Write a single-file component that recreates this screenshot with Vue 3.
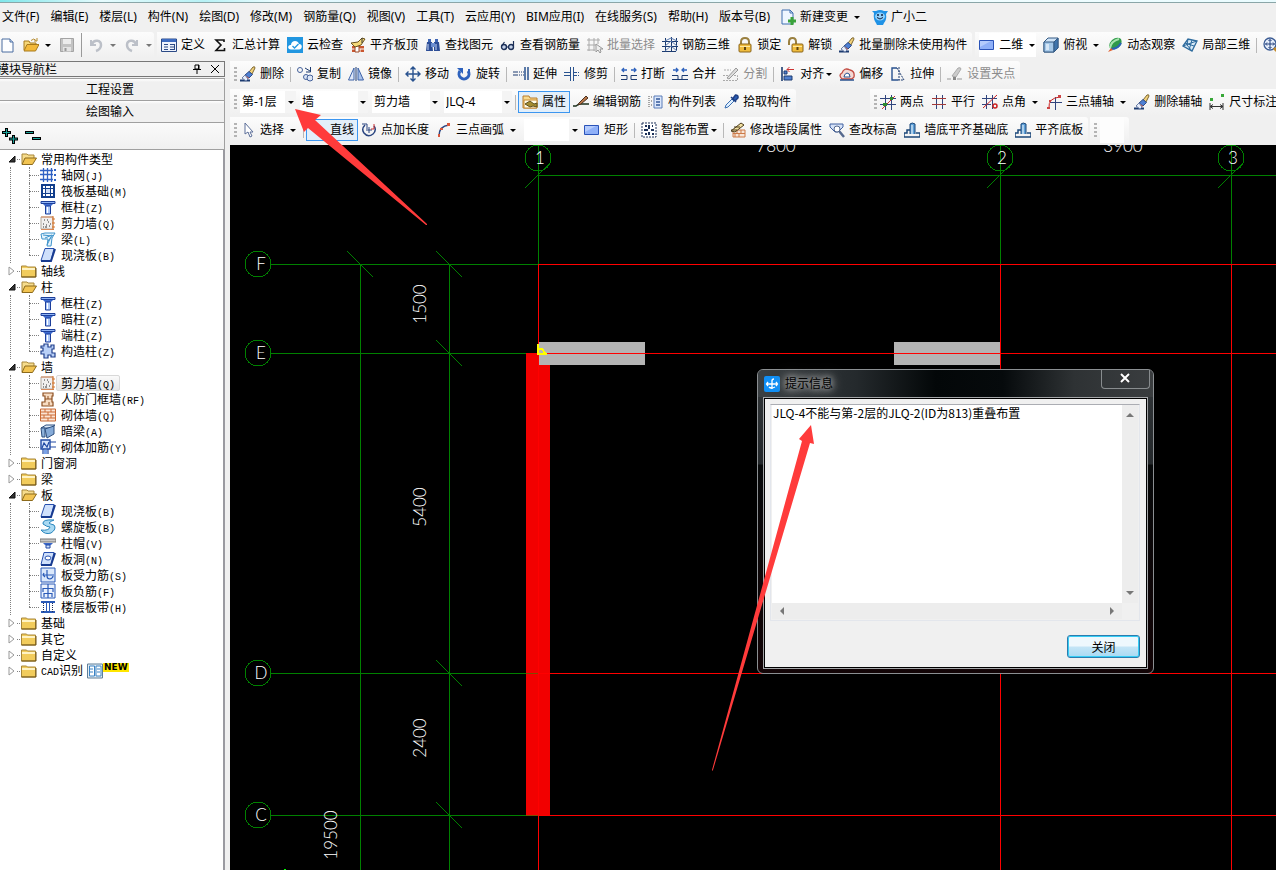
<script setup>
import { ref } from 'vue'

const glyphs = {
  fileNew: '<path d="M2 2h8l3 3v10H2z" fill="#fdfeff" stroke="#4a6da0"/><path d="M10 2v3h3" fill="#cfe0f5" stroke="#4a6da0"/>',
  open: '<path d="M1 13V4h5l1 2h6v2" fill="#f6d778" stroke="#a87a1c"/><path d="M1 14L4 7.500h12L12.500 14z" fill="#f3b93a" stroke="#a87a1c"/><path d="M8 3.500q3-3 5 0M14 1v3h-3" fill="none" stroke="#b58a2c"/>',
  save: '<path d="M1.500 1.500h13v13h-13z" fill="#c3c3c3" stroke="#a4a4a4"/><path d="M4 2h8v5H4z" fill="#ececec"/><path d="M4 10h8v4.500H4z" fill="#e4e4e4"/><path d="M5.500 11h2v3h-2z" fill="#999"/>',
  undo: '<path d="M3 3v5h5" fill="none" stroke="#bcc0c8" stroke-width="2"/><path d="M4 7C6 2 13 3 13 8c0 3-2 5-5 6" fill="none" stroke="#bcc0c8" stroke-width="2.500"/>',
  redo: '<path d="M13 3v5H8" fill="none" stroke="#bcc0c8" stroke-width="2"/><path d="M12 7C10 2 3 3 3 8c0 3 2 5 5 6" fill="none" stroke="#bcc0c8" stroke-width="2.500"/>',
  define: '<path d="M.500 2h15v12.500H.500z" fill="#eef3fc" stroke="#2c4a86"/><path d="M1 2h14v3H1z" fill="#3d6bc0"/><path d="M3 7.500h4M3 10h4M3 12.500h4M9 7.500h4M9 10h4M9 12.500h4M13.500 7v6" stroke="#2c4a86" fill="none"/>',
  sigma: '<path d="M12 5V3H4l5 5-5 5.500h8.500V11" fill="none" stroke="#111" stroke-width="1.600"/>',
  cloud: '<path d="M0 0h16v16H0z" fill="#2196e0"/><path d="M4 12.500C0 12.500.500 7.500 4 8c0-5 7-5.500 8-1 4 0 3.500 5.500 0 5.500z" fill="#fff"/><path d="M5.500 9l2 2 4-4" fill="none" stroke="#2196e0" stroke-width="1.300"/>',
  levelTop: '<path d="M2 9h12v6H2z" fill="#c9562f"/><path d="M2 12h12M6 9v3M10 12v3" stroke="#fff"/><path d="M5 9h4v6H5z" fill="#fff" stroke="#9c4a28"/><path d="M1 6l7-1 4-4 3 1-4 6-6 2z" fill="#f5d978" stroke="#6b5420"/><path d="M12 1v5" stroke="#333"/>',
  find: '<path d="M3 2h3v3H3zM10 2h3v3h-3z" fill="#3f66b4"/><path d="M2 5h5l1 9H1zM9 5h5l1 9H9z" fill="#2c4d96"/><path d="M6 6h4v4H6z" fill="#6b8ed0"/><path d="M3 7v6M11 7v6" stroke="#c6d7f4"/>',
  glasses: '<circle cx="4" cy="10" r="2.500" fill="#c5d2e8" stroke="#1c2f57" stroke-width="1.400"/><circle cx="11" cy="10" r="2.500" fill="#c5d2e8" stroke="#1c2f57" stroke-width="1.400"/><path d="M6.500 10h2M1.500 9l3-4M13.500 9V4" fill="none" stroke="#1c2f57" stroke-width="1.200"/>',
  batch: '<path d="M2 1v13M7 1v13M0 3h13M0 8h9M0 13h8M11 1v6" stroke="#aaa" fill="none"/><path d="M9 7v8l2-2 2 3 1-1-1-3h3z" fill="#eee" stroke="#999"/>',
  rebar3d: '<path d="M3.500 1v14M9.500 0v14M14.500 1v13M0 4.500h16M0 9.500h16M0 14.500h14" stroke="#1c3b70" fill="none"/><path d="M3 4l6-3 6 3M3 9l6-5 6 5M3 14l6-5 6 5" stroke="#5b7bb0" fill="none"/>',
  lock: '<path d="M4 8V5q0-4 4-4t4 4v3" fill="none" stroke="#9a8040" stroke-width="2"/><rect x="2" y="7" width="12" height="8" rx="1" fill="#f0bc3d" stroke="#8a641a"/><path d="M3 9.500h10" stroke="#ffe9a0"/><path d="M8 10v3" stroke="#5c4310" stroke-width="2"/>',
  unlock: '<path d="M1 8V5q0-4 3.500-4T8 5v2" fill="none" stroke="#9a8040" stroke-width="2"/><rect x="4" y="7" width="11" height="8" rx="1" fill="#f0bc3d" stroke="#8a641a"/><path d="M5 9.500h9" stroke="#ffe9a0"/><path d="M9.500 10v3" stroke="#5c4310" stroke-width="2"/>',
  erase: '<path d="M9 6l4-5q2-1 2 1l-3 6z" fill="#f2d27c" stroke="#7c6630"/><path d="M9 5.500L12.500 8.500 9 12 5 9z" fill="#4e80d4" stroke="#2c4a86"/><path d="M5 9l4 3-2 2-4-1z" fill="#d95b4a"/><path d="M0 14.500h10" stroke="#1c3b70" stroke-width="2"/><path d="M2 12l3-3 3 4-2 2z" fill="#e8eefb" stroke="#6a7fa8"/>',
  flat: '<path d="M.500 3.500h14v9H.500z" fill="#8fb0f8" stroke="#2a53b8"/><path d="M1 4h11L1 10z" fill="#b4cbfc"/>',
  cube: '<path d="M1 5l4-4h10v10l-4 4H1z" fill="#cfe3f6" stroke="#345a84"/><path d="M1 5h10v10H1z" fill="#a5c8e8" stroke="#345a84"/><path d="M11 5l4-4v10l-4 4z" fill="#3f74ab" stroke="#345a84"/><path d="M3 7h3v6H3z" fill="#d5e6f6"/>',
  orbit: '<path d="M5 3q5-4 9-1 2 5-3 9-5 2-8 0Q1 7 5 3z" fill="#2f9a4a"/><path d="M12 2q-8 2-9 9" stroke="#a8e4ae" stroke-width="2" fill="none"/><path d="M14 6q-3 6-10 6" stroke="#2b62b5" stroke-width="2" fill="none"/><path d="M1 15l3-4 2 2z" fill="#e06030"/>',
  local3d: '<path d="M1 9l5-7 9 2-5 10z" fill="#d8eaf7" stroke="#2f6c9e" stroke-width="1.300"/><path d="M3 6l9 3M6 2l-1 6 5 6M10 3l-3 10M15 4l-6 2-8 3" fill="none" stroke="#2f6c9e"/>',
  zoomPan: '<circle cx="7" cy="7" r="6" fill="#e8f0fc" stroke="#3c5c94" stroke-width="1.300"/><path d="M7 2.500v9M2.500 7h9M5.500 4L7 2.500 8.500 4M5.500 10L7 11.500 8.500 10M4 5.500L2.500 7 4 8.500M10 5.500L11.500 7 10 8.500" stroke="#1f3d7a" fill="none"/><path d="M11 11l4 4" stroke="#c48a28" stroke-width="3"/>',
  copy: '<circle cx="3" cy="4" r="2.500" fill="none" stroke="#44609a"/><circle cx="9" cy="11" r="2.500" fill="#dce6f6" stroke="#44609a"/><circle cx="13" cy="12" r="3" fill="#dce6f6" stroke="#44609a"/><path d="M8 2l5 3M13.500 1v5H9" fill="none" stroke="#1c3b70"/>',
  mirror: '<path d="M.500 14L6 2v12z" fill="#dfe8f8" stroke="#3d63a8"/><path d="M8 1v14" stroke="#1c3b70"/><path d="M15.500 14L10 2v12z" fill="#a9c2ea" stroke="#3d63a8"/>',
  move: '<path d="M8 1v14M1 8h14M5.500 3.500L8 1l2.500 2.500M5.500 12.500L8 15l2.500-2.500M3.500 5.500L1 8l2.500 2.500M12.500 5.500L15 8l-2.500 2.500" fill="none" stroke="#28528f" stroke-width="1.400"/>',
  rotate: '<path d="M4 5a5 5 0 1 0 8 0" fill="none" stroke="#2e62bd" stroke-width="3"/><path d="M1 2h6v6z" fill="#2e62bd"/><path d="M13 3v4" stroke="#2e62bd" stroke-width="2"/>',
  extend: '<path d="M0 6h5M0 9h5" stroke="#1c3b70"/><path d="M6 6h5M6 9h5" stroke="#1c3b70" stroke-dasharray="1 1"/><path d="M12 1v13M15 1v13" stroke="#28528f" stroke-width="1.500"/>',
  trim: '<path d="M6.500 1v14M9.500 1v14M0 6.500h6M0 9.500h6M9 6.500h3M9 9.500h3" stroke="#28528f" fill="none"/><path d="M12 6.500h4M12 9.500h4" stroke="#28528f" stroke-dasharray="1 1"/>',
  split: '<path d="M0 9.500h6v4H0M16 9.500h-6v4h6" fill="none" stroke="#1c3b70"/><path d="M1 4h5M10 4h5M3 2L1 4l2 2M13 2l2 2-2 2" fill="none" stroke="#2e62bd" stroke-width="1.300"/>',
  merge: '<path d="M0 9.500h6v4H0M16 9.500h-6v4h6M6 13.500h4" fill="none" stroke="#1c3b70"/><path d="M1 4h5M10 4h5M4 2l2 2-2 2M12 2l-2 2 2 2" fill="none" stroke="#2e62bd" stroke-width="1.300"/>',
  divide: '<path d="M1 4h7M0 9.500h6M0 14.500h14.500v-5H11" fill="none" stroke="#aaa" stroke-dasharray="2 1"/><path d="M4 12l9-10 2 2-9 9z" fill="#ddd" stroke="#999"/>',
  align: '<path d="M2 1v14" stroke="#1c3b70" stroke-width="1.600"/><path d="M4 10h8v4H4zM4 5h3v3H4z" fill="#4f7fcf" stroke="#1c3b70"/><path d="M14 3.500H7M9.500 1L7 3.500 9.500 6" fill="none" stroke="#c33"/>',
  offset: '<path d="M3 13Q-1 9 3 7q2-6 8-3 5 1 4 7l-2 2z" fill="#f4d8d4" stroke="#c24b42" stroke-width="1.300"/><path d="M5 11q0-3 3-4 3 0 3 4z" fill="#fff" stroke="#28528f"/><path d="M1 14h14" stroke="#28528f" stroke-width="1.500"/>',
  stretch: '<path d="M8 14H2V2h5" fill="none" stroke="#28528f" stroke-width="1.400"/><path d="M7 2l7 12H8M9 1v13" fill="none" stroke="#1c3b70" stroke-dasharray="2 1"/>',
  grip: '<path d="M5 10l6-8q3-1 3 1l-5 8z" fill="#ccc" stroke="#aaa"/><path d="M0 13h4M10 13h5" stroke="#999"/><path d="M6 11h3v3H6z" fill="#888"/>',
  props: '<path d="M1 13V2h6l1 2h7v10H1z" fill="#f8d98c" stroke="#b87c2c"/><path d="M2 6h13v8H2z" fill="#fffbe8" stroke="#c98a33"/><path d="M3 10l5-3 4 3 3-1v4l-4-1-3 1z" fill="#a48b30" stroke="#5e5220"/>',
  editBar: '<path d="M0 12h3l3-2h10" fill="none" stroke="#1b2f1b" stroke-width="1.500"/><path d="M6 9l7-7 2 2-7 6-3 1z" fill="#b9774a" stroke="#4b321f"/>',
  list: '<path d="M6 2h8v12H6z" fill="#dbe7fb" stroke="#5a7db8"/><path d="M8 5h4M8 8h4M8 11h4" stroke="#34599b" stroke-width="1.500"/><path d="M1 2v12M3 3h2M3 7h2M3 11h2" stroke="#555" stroke-dasharray="1 1"/>',
  pick: '<path d="M2 14l1-3 6-6 2 2-6 6z" fill="#dff0ff" stroke="#3b6fb4"/><path d="M8 3l5 5M9.500 5l3-4q3 0 2.500 3l-3 3z" fill="#2b5db5" stroke="#1e3f83" stroke-width="1.500"/>',
  twoPoint: '<path d="M5.500 1v15M11.500 1v15M0 4.500h16M0 10.500h16" stroke="#30457e"/><path d="M2 15L15 2" stroke="#c33"/><path d="M3 9h4v3H3zM10 3h3v3h-3z" fill="#2e8b2e"/>',
  parallel: '<path d="M5.500 1v14M11.500 1v14" stroke="#30457e"/><path d="M1 4.500h14M1 10.500h14" stroke="#a33a3a"/>',
  pointAngle: '<path d="M4.500 1v14M10.500 1v14M0 4.500h15M0 10.500h9" stroke="#30457e"/><path d="M1 14L15 1" stroke="#c22"/><circle cx="13" cy="12" r="2" fill="none" stroke="#c22" stroke-width="1.500"/>',
  threeAxis: '<path d="M9.500 3v13M4 8.500h12" stroke="#30457e"/><path d="M3 14q-1-10 11-11" fill="none" stroke="#c22"/><path d="M1 13h3v2H1zM3 6h2v2H3zM12 1h3v3h-3z" fill="#c44"/>',
  dimension: '<path d="M1 4h3v3H1zM12 0h3v3h-3z" fill="#38a838"/><path d="M1 9v7M14 9v7M1 12.500h13M4 10.500l-3 2 3 2M11 10.500l3 2-3 2" fill="none" stroke="#333"/>',
  cursor: '<path d="M5 1v11l3-2 2 5 2-1-2-4h3z" fill="#fff" stroke="#5c6f99"/>',
  pointLen: '<path d="M4 3q-4 4-1 8 4 5 9 1 4-4 1-8" fill="none" stroke="#2a4580" stroke-width="1.500"/><path d="M1 2h5v5M8 5v6M5 8h6" stroke="#2a4580" fill="none"/><path d="M13 2v5h-3" stroke="#c33" fill="none"/>',
  arc: '<path d="M3 14Q3 4 13 3" fill="none" stroke="#2a4580" stroke-width="1.500"/><path d="M2 12h2v3H2zM4 6h3v2H4zM11 1h3v3h-3z" fill="#d8573c"/>',
  smart: '<path d="M1 1h14v14H1z" fill="#fff" stroke="#1c3058" stroke-dasharray="2 1"/><path d="M8 3v4M8 10v3M3 8h4M10 8h3M4 4h2M11 4h1M4 12h2M11 12h2" stroke="#1c3058" stroke-width="2"/>',
  wallSeg: '<path d="M3 8h12v7H3z" fill="#f8e6d8" stroke="#cc7a48"/><path d="M3 11.500h12M7 8v3M11 8v3M9 12v3M5 12v3" stroke="#cc7a48"/><path d="M1 9L11 1l3 2-9 7z" fill="#f3e1a0" stroke="#4d3d1d"/><path d="M1 8h6M4 5h6" stroke="#4d3d1d"/>',
  elevation: '<path d="M1 2h13v3l-5 5H6L1 5z" fill="#d6e2f7" stroke="#4060a0"/><circle cx="8" cy="7" r="3" fill="#fff" stroke="#55698e"/><path d="M10 9l5 6" stroke="#55698e" stroke-width="2.500"/>',
  wallBase: '<path d="M6 12V2q2-2 5 0v10" fill="#5ea0d8" stroke="#1b4779"/><path d="M8 3v9" stroke="#fff"/><path d="M0 15v-4h3V8h3M16 15v-4h-4M0 15h16" fill="none" stroke="#1b4779" stroke-width="1.500"/>',
  change: '<path d="M1 1h8l3 3v11H1z" fill="#eef6ff" stroke="#3f6fb0"/><path d="M9 1v3h3" fill="none" stroke="#3f6fb0"/><path d="M11 8v8M7 12h8" stroke="#3aa23a" stroke-width="3"/>',
  mascot: '<path d="M2 4L0 2h4q4-2 8 0h4l-2 3q1 6-2 9l-1 2H5l-1-2Q1 10 2 4z" fill="#1f92e6"/><ellipse cx="8" cy="7.500" rx="5" ry="4" fill="#8fd0fb"/><path d="M6 5v2M10 5v2" stroke="#124" stroke-width="1.500"/><path d="M5 8.500q3 3 6 0" stroke="#124" fill="none"/>',
  axisNet: '<path d="M3.500 1v14M7.500 1v14M11.500 1v14M0 3.500h13M0 7.500h13M0 12.500h13" stroke="#2f62c4" stroke-width="1.300"/><path d="M14 2h2v2h-2zM14 7h2v2h-2zM14 12h2v2h-2z" fill="#2f62c4"/>',
  raft: '<path d="M2 2h12v12H2z" fill="#fff" stroke="#123e8c" stroke-width="2"/><path d="M5.500 1v14M10.500 1v14M1 5.500h14M1 10.500h14" stroke="#123e8c"/><path d="M6 6h4v4H6z" fill="#cddcf6"/>',
  column: '<path d="M1 2.500h14v2H1z" fill="#8fb4f5" stroke="#1d3f9a"/><path d="M3 5h10l-2 2H5z" fill="#3d6bd0"/><path d="M5.500 7h5v8h-5z" fill="#a9c6f8" stroke="#1d3f9a"/><path d="M7.500 8v6" stroke="#fff"/>',
  shear: '<path d="M1 2h12v12H1z" fill="#f1efef" stroke="#b0a9a0"/><path d="M1 2h12M1 14.500h13" stroke="#d98a5c"/><path d="M4 5h1M8 7h1M3 9h1M6 10h1M9 11h1M5 12h2M10 9h1M7 5h1M3 12h1" stroke="#333"/><path d="M13 1v14M12 4h3M12 8h3M12 12h3" stroke="#d9762c"/>',
  beam: '<path d="M1 3l4-1h10l-3 5-1 8H7l1-7H2z" fill="#e6f4fc" stroke="#3f94cc"/><path d="M3 4l9 1M5 7l7-3M8 10l5-6M7 14l4-8" stroke="#3f94cc"/>',
  slab: '<path d="M5 1.500h9l-3 12H1z" fill="#cfe0fb" stroke="#274fae"/><path d="M1 14h10l4-12" fill="none" stroke="#173a90" stroke-width="2"/>',
  structCol: '<path d="M4 1h4v3h3V2h3v4h-2v4h3v4h-4v-2H8v3H4v-4H1V8h2V5H1V3h3z" fill="#b9d0f7" stroke="#203f8c" stroke-width="1.200"/>',
  doorWall: '<path d="M3 2h10v3h-1v6h1v4H2v-4h3V5H3z" fill="#f7dcc2" stroke="#8d4f21" stroke-width="1.200"/><path d="M5 8h7M8 5v3M9 11v3" stroke="#8d4f21"/>',
  brick: '<path d="M.500 2h15v12H.500z" fill="#fbe4d5" stroke="#cb6a35"/><path d="M1 5h14M1 8h14M1 11h14M5 2v3M11 2v3M8 5v3M4 8v3M11 8v3M8 11v3" stroke="#cb6a35"/>',
  hidden: '<path d="M1 5l5-3h9l-4 3z" fill="#dbe9f8" stroke="#2e5080"/><path d="M1 5h4v9H2z" fill="#8fb3db" stroke="#2e5080"/><path d="M5 6l9-3v8l-7 4z" fill="#86abd8" stroke="#2e5080"/>',
  tieBar: '<path d="M1 1h9v9H1z" fill="#d8e5fb" stroke="#1f49a4" stroke-width="1.400"/><path d="M2 9l2-5 3 4 2-5M10 3h6M10 8h6M3 10v5M8 10v5" stroke="#1f49a4" stroke-width="1.200" fill="none"/><path d="M4 11h3v4H4z" fill="#7aa2e8"/>',
  spiral: '<path d="M14 1Q2 0 3 5q4 3 7 3-1 4-9 3 4 5 10 3 6-4 3-8-4-1-5-2 2-2 5-3z" fill="#a9d9f2" stroke="#2a86bd"/>',
  cap: '<path d="M0 4h16v3H0z" fill="#c8c8c8" stroke="#777"/><path d="M3 8h10l-2 2H5z" fill="#3a67c8"/><path d="M6 10h4v3H6z" fill="#cfe0fb" stroke="#1f49a4"/>',
  slabHole: '<path d="M4 1.500h10l-3 12H1z" fill="#cfe0fb" stroke="#274fae"/><path d="M1 14h10l4-12" fill="none" stroke="#173a90" stroke-width="2"/><ellipse cx="8" cy="7" rx="3" ry="2" fill="#fff" stroke="#274fae"/>',
  slabBar: '<path d="M1 1h14v14H1z" fill="#dbe8fb" stroke="#2b5bb8"/><path d="M3 8h11M7 3v6q0 3 3 3 3-1 3-3M4 6l-1 2 2 2" fill="none" stroke="#2b5bb8" stroke-width="1.200"/>',
  slabNeg: '<path d="M1 1h14v14H1z" fill="#eaf1fd" stroke="#2b5bb8"/><path d="M8 1v14M3 5.500h10M3 5v4M13 5v4M4 10.500h8M4 10v4M12 10v4" stroke="#2b5bb8" stroke-width="1.200" fill="none"/>',
  strip: '<path d="M1 3h14M1 13h14" stroke="#2b5bb8" stroke-width="2"/><path d="M3.500 4v9M12.500 4v9" stroke="#1f2f58" stroke-dasharray="1 1"/><path d="M6.500 4v9M9.500 4v9" stroke="#2b5bb8"/>',
  cadPages: '<path d="M.500 1h15v14H.500z" fill="#e5eef5" stroke="#5f7f98"/><path d="M2.500 3h5v10h-5zM9 3h5v10H9z" fill="#fff" stroke="#3a83c4"/><path d="M3 6h3M3 9h3M10 6h3M10 9h3" stroke="#3a83c4"/>',
  folder: '<path d="M.500 14V3h5l1 1h8v10z" fill="#f2cc5c" stroke="#a8873a"/><path d="M1 6h13" stroke="#fff3c4" stroke-width="2"/><path d="M.500 14h14.500V5" fill="none" stroke="#6e5212"/>',
  folderOpen: '<path d="M1 13V3h5l1 1h6v3" fill="#f6dc8c" stroke="#a8873a"/><path d="M1 13.500L4 7h11.500l-4 6.500z" fill="#f2c452" stroke="#8c6a1c"/>',
  logo: '<rect width="16" height="16" rx="2" fill="#108ff5"/><path d="M8 4v9M2.500 8h11M8 5q0-2 2-2M4 6L2.500 8 4 10M12 6l1.500 2L12 10M5 11q2 2 6 0" fill="none" stroke="#fff" stroke-width="1.300"/>'
}

const menus = ['文件(F)', '编辑(E)', '楼层(L)', '构件(N)', '绘图(D)', '修改(M)', '钢筋量(Q)', '视图(V)', '工具(T)', '云应用(Y)', 'BIM应用(I)', '在线服务(S)', '帮助(H)', '版本号(B)']

const b = (icon, text, extra = {}) => ({ type: 'btn', icon, text, ...extra })
const sep = { type: 'sep' }
const combo = (name, text, size = '') => ({ type: 'combo', name, text, size })
const drop = { drop: 'wide' }
const tight = { drop: 'tight' }

const topBars = [
  { items: [b('define', '定义'), b('sigma', '汇总计算'), b('cloud', '云检查'), b('levelTop', '平齐板顶'), b('find', '查找图元'), b('glasses', '查看钢筋量'), b('batch', '批量选择', { off: true }), b('rebar3d', '钢筋三维'), b('lock', '锁定'), b('unlock', '解锁'), b('erase', '批量删除未使用构件')] },
  { items: [b('flat', '二维', { drop: 'wide', white: true }), b('cube', '俯视', drop), b('orbit', '动态观察'), b('local3d', '局部三维'), sep, b('zoomPan', '')] }
]

const rows = [
  [{ grip: true, items: [b('erase', '删除'), sep, b('copy', '复制'), b('mirror', '镜像'), sep, b('move', '移动'), b('rotate', '旋转'), sep, b('extend', '延伸'), b('trim', '修剪'), sep, b('split', '打断'), b('merge', '合并'), b('divide', '分割', { off: true }), sep, b('align', '对齐', tight), b('offset', '偏移'), b('stretch', '拉伸'), sep, b('grip', '设置夹点', { off: true })] }],
  [
    { grip: true, items: [combo('楼层', '第-1层', 'small'), combo('构件类型', '墙'), combo('构件', '剪力墙'), combo('构件名称', 'JLQ-4'), sep, b('props', '属性', { on: true }), b('editBar', '编辑钢筋'), b('list', '构件列表'), b('pick', '拾取构件')] },
    { grip: true, apart: true, items: [b('twoPoint', '两点'), b('parallel', '平行'), b('pointAngle', '点角', drop), b('threeAxis', '三点辅轴', drop), b('erase', '删除辅轴'), b('dimension', '尺寸标注')] }
  ],
  [
    { grip: true, items: [b('cursor', '选择', drop), sep, b('', '直线', { on: true }), b('pointLen', '点加长度'), b('arc', '三点画弧', drop), combo('画法', '', 'small'), b('flat', '矩形'), sep, b('smart', '智能布置', tight), sep, b('wallSeg', '修改墙段属性'), b('elevation', '查改标高'), b('wallBase', '墙底平齐基础底'), b('wallBase', '平齐底板')] },
    { grip: true, items: [{ type: 'blank' }] }
  ]
]

const k = (icon, text, key, on = false) => ({ icon, text, key, on })
const tree = ref([
  { text: '常用构件类型', kids: [k('axisNet', '轴网', 'J'), k('raft', '筏板基础', 'M'), k('column', '框柱', 'Z'), k('shear', '剪力墙', 'Q'), k('beam', '梁', 'L'), k('slab', '现浇板', 'B')] },
  { text: '轴线' },
  { text: '柱', kids: [k('column', '框柱', 'Z'), k('column', '暗柱', 'Z'), k('column', '端柱', 'Z'), k('structCol', '构造柱', 'Z')] },
  { text: '墙', kids: [k('shear', '剪力墙', 'Q', true), k('doorWall', '人防门框墙', 'RF'), k('brick', '砌体墙', 'Q'), k('hidden', '暗梁', 'A'), k('tieBar', '砌体加筋', 'Y')] },
  { text: '门窗洞' },
  { text: '梁' },
  { text: '板', kids: [k('slab', '现浇板', 'B'), k('spiral', '螺旋板', 'B'), k('cap', '柱帽', 'V'), k('slabHole', '板洞', 'N'), k('slabBar', '板受力筋', 'S'), k('slabNeg', '板负筋', 'F'), k('strip', '楼层板带', 'H')] },
  { text: '基础' },
  { text: '其它' },
  { text: '自定义' },
  { text: '识别', pre: 'CAD', fresh: true }
])

const message = ref('JLQ-4不能与第-2层的JLQ-2(ID为813)重叠布置')

const colAxes = [{ n: '1', x: 308 }, { n: '2', x: 770 }, { n: '3', x: 1001 }]
const rowAxes = [{ n: 'F', y: 119 }, { n: 'E', y: 208 }, { n: 'D', y: 528 }, { n: 'C', y: 670 }]
const ticks = [[130, 119], [219, 119], [219, 208], [219, 528], [219, 670]]
const spans = [['1500', 196, 159], ['5400', 196, 362], ['2400', 196, 593], ['19500', 107, 690]]
</script>

<template>
  <div class="app">
    <div class="aero"></div>
    <nav class="menu">
      <button v-for="m in menus" :key="m" type="button">{{ m }}</button>
      <button type="button" class="with-icon"><svg class="ico" viewBox="0 0 16 16" v-html="glyphs.change"></svg>新建变更<i class="tri wide"></i></button>
      <button type="button" class="with-icon"><svg class="ico" viewBox="0 0 16 16" v-html="glyphs.mascot"></svg>广小二</button>
    </nav>
    <div class="row top">
      <div class="bar file">
        <button type="button" class="item" aria-label="新建"><svg class="ico" viewBox="0 0 16 16" v-html="glyphs.fileNew"></svg></button>
        <button type="button" class="item" aria-label="打开"><svg class="ico" viewBox="0 0 16 16" v-html="glyphs.open"></svg><i class="tri wide"></i></button>
        <button type="button" class="item" aria-label="保存"><svg class="ico" viewBox="0 0 16 16" v-html="glyphs.save"></svg></button>
        <span class="sep tall"></span>
        <button type="button" class="item off" aria-label="撤销"><svg class="ico" viewBox="0 0 16 16" v-html="glyphs.undo"></svg><i class="tri wide"></i></button>
        <button type="button" class="item off" aria-label="恢复"><svg class="ico" viewBox="0 0 16 16" v-html="glyphs.redo"></svg><i class="tri wide"></i></button>
      </div>
      <div v-for="(bar, i) in topBars" :key="i" class="bar">
        <template v-for="(it, j) in bar.items" :key="j">
          <span v-if="it.type === 'sep'" class="sep"></span>
          <button v-else type="button" class="item" :class="{ off: it.off, white: it.white }" :aria-label="it.text || '缩放'">
            <svg class="ico" viewBox="0 0 16 16" v-html="glyphs[it.icon]"></svg>{{ it.text }}<i v-if="it.drop" class="tri" :class="it.drop"></i>
          </button>
        </template>
      </div>
    </div>

    <div class="body">
      <aside class="side">
        <header class="side-head">
          <span class="side-title">模块导航栏</span>
          <button type="button" aria-label="固定"><svg viewBox="0 0 10 10"><path d="M3 1h4v4H3zM6.500 1v4M1 5.500h8M5 6v4" fill="none" stroke="#000" /></svg></button>
          <button type="button" aria-label="关闭导航栏"><svg viewBox="0 0 10 10"><path d="M1 1l8 8M9 1L1 9" fill="none" stroke="#000" /></svg></button>
        </header>
        <button type="button" class="tab">工程设置</button>
        <button type="button" class="tab">绘图输入</button>
        <div class="side-tools">
          <button type="button" aria-label="全部展开"><svg viewBox="0 0 16 16"><path d="M0 4.500h9M4.500 0v9M7 11h9M11.500 7v9" stroke="#000" stroke-width="3" /><path d="M1 4.500h7M4.500 1v7M8 11h7M11.500 8v7" stroke="#1aa39a" /></svg></button>
          <button type="button" aria-label="全部折叠"><svg viewBox="0 0 16 16"><path d="M0 4.500h9M7 10.500h9" stroke="#000" stroke-width="3" /><path d="M1 4.500h7M8 10.500h7" stroke="#1aa39a" /></svg></button>
        </div>
        <ul class="tree">
          <li v-for="g in tree" :key="g.text">
            <div class="node">
              <svg class="twist" viewBox="0 0 8 10"><path v-if="g.kids" d="M7 2v6H1z" fill="#333" stroke="#111" /><path v-else d="M1 1l5 4-5 4z" fill="#fff" stroke="#999" /></svg>
              <span class="stub"></span>
              <svg class="ico" viewBox="0 0 16 16" v-html="g.kids ? glyphs.folderOpen : glyphs.folder"></svg>
              <span class="name"><span v-if="g.pre" class="mono">{{ g.pre }}</span>{{ g.text }}</span>
              <template v-if="g.fresh">
                <svg class="ico" viewBox="0 0 16 16" v-html="glyphs.cadPages"></svg><span class="fresh">NEW</span>
              </template>
            </div>
            <ul v-if="g.kids" class="kids">
              <li v-for="(c, i) in g.kids" :key="i" class="kid">
                <svg class="ico" viewBox="0 0 16 16" v-html="glyphs[c.icon]"></svg>
                <span class="leaf" :class="{ on: c.on }">{{ c.text }}<span class="mono">({{ c.key }})</span></span>
              </li>
            </ul>
          </li>
        </ul>
      </aside>

      <main class="main">
        <div v-for="(r, ri) in rows" :key="ri" class="row">
          <div v-for="(bar, i) in r" :key="i" class="bar" :class="{ apart: bar.apart }">
            <span v-if="bar.grip" class="grip"></span>
            <template v-for="(it, j) in bar.items" :key="j">
              <span v-if="it.type === 'sep'" class="sep"></span>
              <span v-else-if="it.type === 'blank'" class="blank"></span>
              <span v-else-if="it.type === 'combo'" class="combo" :class="it.size">
                <select :aria-label="it.name"><option>{{ it.text }}</option></select>
                <i class="tri"></i>
              </span>
              <button v-else type="button" class="item" :class="{ off: it.off, on: it.on }">
                <svg class="ico" viewBox="0 0 16 16" v-html="glyphs[it.icon] || ''"></svg>{{ it.text }}<i v-if="it.drop" class="tri" :class="it.drop"></i>
              </button>
            </template>
          </div>
        </div>

        <section class="canvas">
          <svg class="cad" shape-rendering="crispEdges">
            <g stroke="#008000" fill="none">
              <path d="M308.500 0v119M308 30.500h4000M130.500 119v2000M219.500 119v2000M770.500 0v120M1001.500 0v120" />
              <template v-for="a in colAxes" :key="a.n">
                <circle :cx="a.x" cy="13" r="13" />
                <path :d="`M${a.x - 13} 43l26 -26`" />
              </template>
              <template v-for="a in rowAxes" :key="a.n">
                <circle cx="28" :cy="a.y" r="13" />
                <path :d="`M41 ${a.y + 0.5}H308`" />
              </template>
              <path v-for="(t, i) in ticks" :key="i" :d="`M${t[0] - 13} ${t[1] - 13}l26 26`" />
            </g>
            <path d="M296 208h24v463h-24z" fill="#f20000" />
            <path d="M309 197h106v23H309zM664 197h106v23H664z" fill="#b4b4b4" />
            <g stroke="#f00" fill="none">
              <path d="M308 119.500h4000M308 208.500h4000M308 528.500h4000M308 670.500h4000" />
              <path d="M308.500 119v89M308.500 208v2000M770.500 119v2000M1001.500 119v2000" />
            </g>
            <path d="M296 528.500h12M296 670.500h12" stroke="#7a5000" />
            <path d="M308 199v9.500h9M308 204h4l3 4" stroke="#ff0" stroke-width="2" fill="none" />
            <g class="cad-text">
              <text v-for="a in colAxes" :key="a.n" :x="a.x + 2" y="19">{{ a.n }}</text>
              <text v-for="a in rowAxes" :key="a.n" x="31" :y="a.y + 6">{{ a.n }}</text>
              <text x="546" y="7">7800</text>
              <text x="893" y="7">3900</text>
              <text v-for="s in spans" :key="s[0]" :transform="`translate(${s[1]} ${s[2]}) rotate(-90)`">{{ s[0] }}</text>
            </g>
            <path d="M54 724.500h2" stroke="#0f0" />
          </svg>

          <div class="dialog" role="dialog" aria-labelledby="dlg-title">
            <header class="dlg-head">
              <svg class="ico" viewBox="0 0 16 16" v-html="glyphs.logo"></svg>
              <span id="dlg-title" class="dlg-title">提示信息</span>
              <button type="button" class="dlg-x" aria-label="关闭窗口"><svg viewBox="0 0 12 10"><path d="M2 1l8 8M10 1L2 9" stroke="#333" stroke-width="4" /><path d="M2 1l8 8M10 1L2 9" stroke="#fff" stroke-width="2" /></svg></button>
            </header>
            <div class="dlg-body">
              <div class="pane">
                <textarea v-model="message" aria-label="提示信息" readonly></textarea>
                <div class="scroll v"><svg viewBox="0 0 8 4"><path d="M0 4l4-4 4 4z" fill="#777" /></svg><svg viewBox="0 0 8 4"><path d="M0 0l4 4 4-4z" fill="#777" /></svg></div>
                <div class="scroll h"><svg viewBox="0 0 4 8"><path d="M4 0L0 4l4 4z" fill="#777" /></svg><svg viewBox="0 0 4 8"><path d="M0 0l4 4-4 4z" fill="#777" /></svg></div>
              </div>
              <button type="button" class="close">关闭</button>
            </div>
          </div>
        </section>
      </main>
    </div>

    <svg class="marks" aria-hidden="true">
      <path d="M295 109l26 6-6 5 112 104v1h-1l-118-97-4 4z" fill="#ff3b3b" />
      <path d="M811 425l3 19-4-1-97 327-1 1v-1l90-329-3-2z" fill="#ff3b3b" />
    </svg>
  </div>
</template>

<style>
body {
  margin: 0;
  background: #f0f0f0;
}
</style>

<style scoped>
.app {
  position: relative;
  display: flex;
  flex-direction: column;
  min-height: 100vh;
  overflow: hidden;
  background: #f0f0f0;
  color: #000;
  font: 12px/16px "Noto Sans", "Noto Sans CJK SC", sans-serif;
  white-space: nowrap;
}
button,
select,
textarea {
  margin: 0;
  padding: 0;
  border: 0;
  background: none;
  color: inherit;
  font: inherit;
}
button {
  flex: none;
}
svg {
  display: block;
  flex: none;
}
.aero {
  height: 2px;
  border-bottom: 1px solid #8aa6a8;
  background: linear-gradient(90deg, #7fe6ea, #e6fbfd 8%, #b7f1f5 16%, #eefcff 22%, #bfe9f8 40%, #f4fdff 60%, #eafcff);
}
.menu {
  display: flex;
  align-items: center;
  gap: 11px;
  height: 28px;
  padding-left: 2px;
}
.with-icon,
.item {
  display: flex;
  align-items: center;
  gap: 4px;
}
.menu .with-icon {
  gap: 3px;
}
.menu .tri.wide {
  margin-left: 3px;
}
.ico {
  width: 16px;
  height: 16px;
}
.tri {
  flex: none;
  width: 0;
  height: 0;
  border: solid transparent;
  border-width: 3px 3px 0;
  border-top-color: #000;
}
.tri.wide {
  margin: 0 1px 0 2px;
}
.tri.tight {
  margin-left: -2px;
}
.row {
  display: flex;
  gap: 2px;
}
.row.top {
  gap: 3px;
  padding: 1px 0 2px;
}
.bar {
  display: flex;
  flex: none;
  align-items: center;
  gap: 7px;
  height: 26px;
  padding: 0 5px 0 4px;
  border-radius: 0 3px 3px 0;
  background: linear-gradient(#fcfcfc, #f0f0f0);
}
.bar.file {
  padding: 0 1px 0 0;
}
.bar.apart {
  margin-left: 72px;
}
.item {
  height: 24px;
}
.item.off {
  color: #8c8c8c;
}
.item.off .tri {
  border-top-color: #777;
}
.item.white {
  background: #fff;
}
.item.on {
  height: 22px;
  margin: 0 -4px;
  padding: 0 3px;
  border: 1px solid #3c96f0;
  background: #e3effa;
}
.sep {
  flex: none;
  width: 1px;
  height: 15px;
  margin: 0 -1px;
  background: #b8b8b8;
}
.sep.tall {
  height: 24px;
  background: #9a9a9a;
}
.grip {
  flex: none;
  width: 3px;
  height: 14px;
  margin-right: -4px;
  background: repeating-linear-gradient(#b4b4b4 0 2px, transparent 2px 4px);
}
.blank {
  width: 24px;
  height: 26px;
  background: #fdfdfd;
}
.combo {
  position: relative;
  flex: none;
  width: 68px;
  height: 22px;
  margin-right: -3px;
  background: linear-gradient(90deg, #fff 58px, #f4f4f4 58px);
}
.combo.small {
  width: 56px;
  background: linear-gradient(90deg, #fff 45px, #f4f4f4 45px);
}
.combo select {
  width: 100%;
  height: 100%;
  padding-left: 2px;
  appearance: none;
}
.combo .tri {
  position: absolute;
  top: 10px;
  right: 2px;
  pointer-events: none;
}
.body {
  display: flex;
  flex: 1;
  margin-top: 1px;
}
.side {
  display: flex;
  flex: none;
  flex-direction: column;
  width: 225px;
  margin-right: 5px;
  font-family: "Noto Sans CJK SC", sans-serif;
}
.side-head {
  display: flex;
  align-items: center;
  gap: 8px;
  height: 14px;
  margin-bottom: 1px;
  padding-right: 4px;
  border: 1px solid #777;
  border-left: 0;
  overflow: hidden;
}
.side-title {
  flex: 1;
  margin-left: -3px;
}
.side-head svg {
  width: 10px;
  height: 10px;
}
.tab {
  height: 22px;
  padding: 0 4px 2px 0;
  border: solid #a0a0a0;
  border-width: 1px 1px 0 0;
  background: linear-gradient(#fff, #f0f0f0 3px);
}
.side-tools {
  display: flex;
  align-items: center;
  gap: 7px;
  height: 26px;
  padding-left: 2px;
  border: solid #a0a0a0;
  border-width: 1px 1px 1px 0;
  background: linear-gradient(#fafafa, #f0f0f0);
}
.side-tools svg {
  width: 16px;
  height: 16px;
}
.tree {
  flex: 1;
  margin: 0;
  padding: 1px 0 0;
  border-right: 2px solid #9a9aa0;
  background: #fff;
  list-style: none;
}
.node {
  display: flex;
  align-items: center;
  height: 16px;
  padding-left: 8px;
}
.twist {
  width: 8px;
  height: 10px;
}
.stub {
  width: 3px;
  margin: 0 1px;
  border-top: 1px dotted #808080;
}
.name {
  margin: 0 4px;
}
.mono {
  font: 10px/16px "Liberation Mono", monospace;
}
.fresh {
  align-self: flex-start;
  padding: 0 1px;
  background: #ffe600;
  font: bold 9px/9px "DejaVu Sans", sans-serif;
}
.kids {
  margin: 0 0 0 10px;
  padding: 0 0 0 18px;
  border-left: 1px dotted #808080;
  list-style: none;
}
.kid {
  position: relative;
  display: flex;
  align-items: center;
  height: 16px;
  padding-left: 11px;
}
.kid::before,
.kid::after {
  position: absolute;
  left: 0;
  border: 0 dotted #808080;
  content: "";
}
.kid::before {
  top: 0;
  bottom: 0;
  border-left-width: 1px;
}
.kid:last-child::before {
  bottom: 8px;
}
.kid::after {
  top: 8px;
  width: 10px;
  border-top-width: 1px;
}
.leaf {
  height: 14px;
  padding: 0 4px;
  border: 1px solid transparent;
  line-height: 14px;
}
.leaf .mono {
  line-height: 14px;
}
.leaf.on {
  border-color: #d8d8d8;
  border-radius: 2px;
  background: linear-gradient(#fafafa, #e6e6e6);
}
.main {
  display: flex;
  flex: 1;
  flex-direction: column;
  gap: 2px;
  min-width: 0;
}
.canvas {
  position: relative;
  flex: 1;
  overflow: hidden;
  background: #000;
}
.cad {
  position: absolute;
  width: 100%;
  height: 100%;
}
.cad-text {
  fill: #fff;
  font: 300 17px Lato, sans-serif;
  text-anchor: middle;
}
.dialog {
  position: absolute;
  top: 224px;
  left: 527px;
  box-sizing: border-box;
  width: 397px;
  padding: 0 5px 4px;
  border: 1px solid #8b8f92;
  border-radius: 6px;
  background: linear-gradient(180deg, #33373a, #24282b 94px, #07090a 95px, #120406);
}
.dlg-head {
  display: flex;
  align-items: center;
  height: 27px;
  margin: 0 -5px;
  padding-left: 6px;
  border-radius: 5px 5px 0 0;
  background: linear-gradient(90deg, #3b4043, #24292c 25%, #030708 45%, #060a0c 62%, #2e3234 80%, #3a3d3f);
}
.dlg-title {
  flex: 1;
  margin-left: 5px;
  padding-bottom: 2px;
  font-family: "Noto Sans CJK SC", sans-serif;
  text-shadow: 0 0 6px #ccc, 0 0 10px #aaa, 0 0 14px #999;
}
.dlg-x {
  display: flex;
  align-self: flex-start;
  justify-content: center;
  height: 19px;
  margin-right: 3px;
  padding: 3px 18px 0 17px;
  border: 1px solid #888c8e;
  border-top: 0;
  border-radius: 0 0 4px 4px;
}
.dlg-x svg {
  width: 12px;
  height: 10px;
}
.dlg-body {
  padding: 6px 7px 10px 6px;
  border: 1px solid #a4a6a8;
  outline: 1px solid #000;
  outline-offset: -2px;
  background: #f0f0f0;
}
.pane {
  display: grid;
  grid-template-columns: 1fr 16px;
  grid-template-rows: 198px 16px;
  padding: 0 1px 1px;
  border: 1px solid #e3e6ec;
  border-top-color: #abadb3;
}
.pane textarea {
  padding: 0 1px;
  outline: 0;
  background: #fff;
  font: 12px/16px "Noto Sans CJK SC", sans-serif;
  resize: none;
}
.scroll {
  display: flex;
  align-items: center;
  justify-content: space-between;
  background: #ededed;
}
.scroll.v {
  flex-direction: column;
  padding: 8px 0;
}
.scroll.h {
  padding: 0 8px;
}
.scroll.v svg {
  width: 8px;
  height: 4px;
}
.scroll.h svg {
  width: 4px;
  height: 8px;
}
.close {
  display: block;
  width: 73px;
  height: 23px;
  margin: 14px 0 0 auto;
  border: 1px solid #2c7cae;
  border-radius: 3px;
  background: linear-gradient(#eef8fd 48%, #c4e5f6 52%, #a9daf3);
  box-shadow: inset 0 0 0 1px #35cdf5;
  font-family: "Noto Sans CJK SC", sans-serif;
}
.marks {
  position: absolute;
  top: 0;
  left: 0;
  width: 100%;
  height: 100%;
  pointer-events: none;
}
</style>
